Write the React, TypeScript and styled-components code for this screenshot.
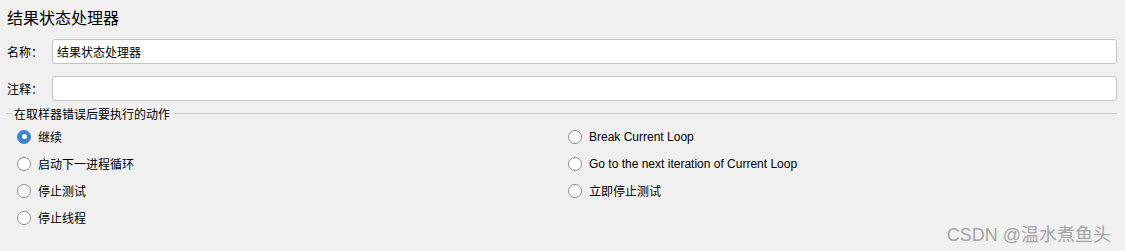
import React from "react";
import styled, { createGlobalStyle } from "styled-components";

const Global = createGlobalStyle`
  html, body { margin: 0; padding: 0; background: #f0f0f0; }
  body { font-family: "Liberation Sans", Arial, "Noto Sans CJK SC", sans-serif; font-size: 12px; color: #000; }
`;

const Page = styled.div`
  position: relative;
  height: 251px;
  box-sizing: border-box;
  padding: 0 8px 0 6px;
  background: #f0f0f0;
  overflow: hidden;
`;

const Title = styled.div`
  font-size: 16px;
  line-height: 37px;
  height: 37px;
  margin-bottom: 2px;
  padding-left: 1px;
  font-family: "Liberation Sans", "Noto Sans CJK SC", sans-serif;
`;

const Form = styled.div`
  display: grid;
  grid-template-columns: 46px 1fr;
  row-gap: 12px;
  align-items: center;
`;

const Label = styled.label`
  font-size: 12px;
  padding-left: 1px;
  font-family: "Liberation Sans", "Noto Sans CJK SC", sans-serif;
`;

const TextInput = styled.input`
  box-sizing: border-box;
  height: 25px;
  width: 100%;
  margin: 0;
  border: 1px solid #c4c4c4;
  border-radius: 3px;
  background: #fff;
  padding: 0 4px;
  font-size: 12px;
  font-family: "Liberation Sans", "Noto Sans CJK SC", sans-serif;
  color: #000;
  outline: none;
`;

const GroupHeader = styled.div`
  display: flex;
  align-items: center;
  height: 16px;
  margin-top: 4px;
  &::before {
    content: "";
    width: 6px;
    height: 1px;
    background: #cdcdcd;
    margin-right: 2px;
  }
  &::after {
    content: "";
    flex: 1;
    height: 1px;
    background: #cdcdcd;
    margin-left: 3px;
  }
`;

const Legend = styled.span`
  font-size: 12px;
  font-family: "Liberation Sans", "Noto Sans CJK SC", sans-serif;
`;

const Options = styled.div`
  display: grid;
  grid-template-columns: 551px 1fr;
  grid-auto-rows: 27px;
  padding: 2px 0 0 11px;
`;

const Option = styled.label`
  display: flex;
  align-items: center;
  gap: 7px;
  font-size: 12px;
  font-family: "Liberation Sans", "Noto Sans CJK SC", sans-serif;
`;

const Radio = styled.span<{ $checked?: boolean }>`
  box-sizing: border-box;
  width: 14px;
  height: 14px;
  border-radius: 50%;
  flex: none;
  display: flex;
  align-items: center;
  justify-content: center;
  background: ${(p) => (p.$checked ? "#3f83d0" : "#fff")};
  border: 1px solid ${(p) => (p.$checked ? "#3f83d0" : "#8e8e8e")};
  &::after {
    content: "";
    width: 5px;
    height: 5px;
    border-radius: 50%;
    background: #fff;
    display: ${(p) => (p.$checked ? "block" : "none")};
  }
`;

const Watermark = styled.div`
  position: absolute;
  right: 14px;
  bottom: 5px;
  font-size: 18px;
  color: #a6a6a6;
  font-family: "Liberation Sans", "Noto Sans CJK SC", sans-serif;
`;

const left = [
  { text: "继续", checked: true },
  { text: "启动下一进程循环" },
  { text: "停止测试" },
  { text: "停止线程" },
];
const right = [
  { text: "Break Current Loop" },
  { text: "Go to the next iteration of Current Loop" },
  { text: "立即停止测试" },
];

export default function App() {
  const cells: React.ReactNode[] = [];
  for (let i = 0; i < 4; i++) {
    const l = left[i];
    const r = right[i];
    cells.push(
      <Option key={"l" + i}>
        <Radio $checked={l.checked} />
        {l.text}
      </Option>
    );
    cells.push(
      r ? (
        <Option key={"r" + i}>
          <Radio />
          {r.text}
        </Option>
      ) : (
        <span key={"r" + i} />
      )
    );
  }
  return (
    <>
      <Global />
      <Page>
        <Title>结果状态处理器</Title>
        <Form>
          <Label>名称：</Label>
          <TextInput defaultValue="结果状态处理器" />
          <Label>注释：</Label>
          <TextInput defaultValue="" />
        </Form>
        <GroupHeader>
          <Legend>在取样器错误后要执行的动作</Legend>
        </GroupHeader>
        <Options>{cells}</Options>
        <Watermark>CSDN @温水煮鱼头</Watermark>
      </Page>
    </>
  );
}
